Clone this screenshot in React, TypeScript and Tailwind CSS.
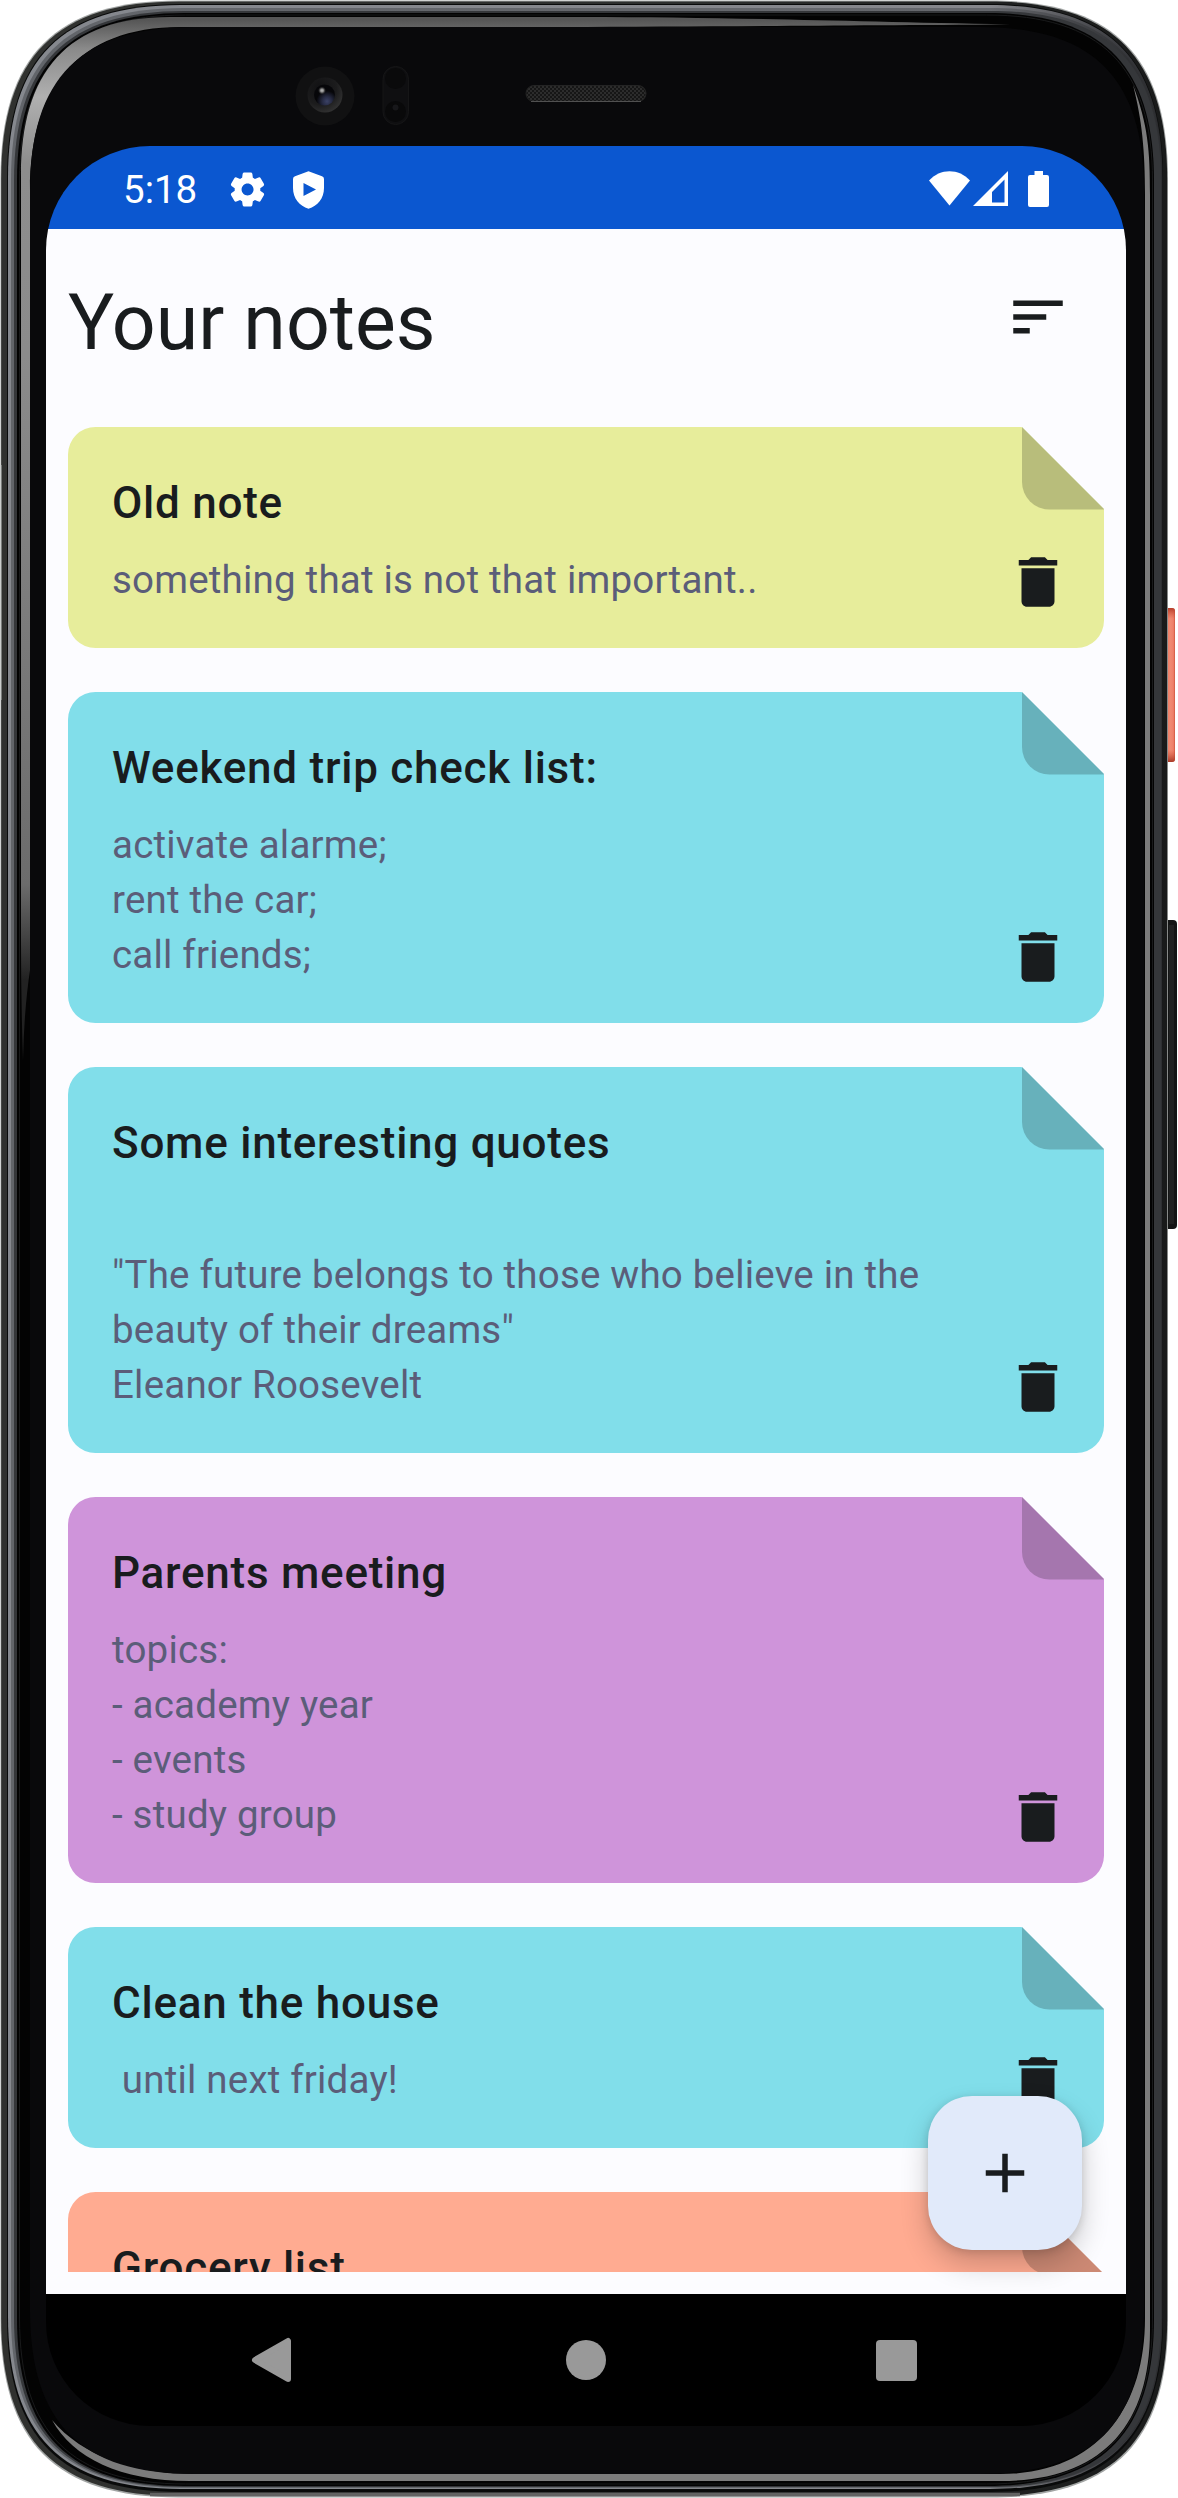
import { useId } from "react";

type Note = { title: string; content: string; color: string; fold: string };

const notes: Note[] = [
  { title: "Old note", content: "something that is not that important..", color: "bg-[#e7ed9b]", fold: "#b8bd7b" },
  {
    title: "Weekend trip check list:",
    content: "activate alarme;\nrent the car;\ncall friends;",
    color: "bg-[#81deea]",
    fold: "#67b1bb",
  },
  {
    title: "Some interesting quotes",
    content: "\n\"The future belongs to those who believe in the\nbeauty of their dreams\"\nEleanor Roosevelt",
    color: "bg-[#81deea]",
    fold: "#67b1bb",
  },
  {
    title: "Parents meeting",
    content: "topics:\n- academy year\n- events\n- study group",
    color: "bg-[#cf94da]",
    fold: "#a576ae",
  },
  { title: "Clean the house", content: " until next friday!", color: "bg-[#81deea]", fold: "#67b1bb" },
  { title: "Grocery list", content: "", color: "bg-[#ffab91]", fold: "#cc8974" },
];

/** Rounded outline whose corners are softer than circular arcs. */
function outline(l: number, t: number, r: number, b: number, c: number) {
  const h = c * 0.31;
  return [
    `M${l} ${t + c}C${l} ${t + h} ${l + h} ${t} ${l + c} ${t}`,
    `H${r - c}C${r - h} ${t} ${r} ${t + h} ${r} ${t + c}`,
    `V${b - c}C${r} ${b - h} ${r - h} ${b} ${r - c} ${b}`,
    `H${l + c}C${l + h} ${b} ${l} ${b - h} ${l} ${b - c}Z`,
  ].join("");
}

function DeviceFrame() {
  const id = useId();
  const ref = (name: string) => `url(#${id}${name})`;
  return (
    <svg className="absolute inset-0" width="1178" height="2498" viewBox="0 0 1178 2498" aria-hidden="true">
      <defs>
        <linearGradient id={`${id}edge`} x1="0" x2="1">
          <stop offset="0" stopColor="#30312f" />
          <stop offset="0.6" stopColor="#2d2f2e" />
          <stop offset="1" stopColor="#191a1a" />
        </linearGradient>
        <linearGradient id={`${id}light`} x1="0" x2="1">
          <stop offset="0" stopColor="#85888e" />
          <stop offset="0.85" stopColor="#85868b" />
          <stop offset="0.97" stopColor="#35363a" />
          <stop offset="1" stopColor="#28292b" />
        </linearGradient>
        <linearGradient id={`${id}mid`} x1="0" x2="1">
          <stop offset="0" stopColor="#62656a" />
          <stop offset="0.85" stopColor="#66686d" />
          <stop offset="0.97" stopColor="#303134" />
          <stop offset="1" stopColor="#2e2f32" />
        </linearGradient>
        <linearGradient id={`${id}ringL`} gradientUnits="userSpaceOnUse" x1="0" y1="980" x2="0" y2="20">
          <stop offset="0" stopColor="#222" />
          <stop offset="0.1" stopColor="#6c6c6c" />
          <stop offset="0.65" stopColor="#8b8b8b" />
          <stop offset="0.85" stopColor="#8d8d8d" />
          <stop offset="0.92" stopColor="#b0b0b0" />
          <stop offset="0.97" stopColor="#8a8a8a" />
          <stop offset="1" stopColor="#565656" />
        </linearGradient>
        <linearGradient id={`${id}power`} x1="0" x2="1">
          <stop offset="0" stopColor="#d85c42" />
          <stop offset="0.25" stopColor="#ed7c64" />
          <stop offset="0.6" stopColor="#f08a72" />
          <stop offset="0.85" stopColor="#ee8069" />
          <stop offset="1" stopColor="#cf573f" />
        </linearGradient>
        <linearGradient id={`${id}powerEnd`} x1="0" y1="0" x2="0" y2="1">
          <stop offset="0" stopColor="#b43e2a" />
          <stop offset="0.07" stopColor="#cf5138" stopOpacity="0" />
          <stop offset="0.92" stopColor="#cf5138" stopOpacity="0" />
          <stop offset="1" stopColor="#a63a28" />
        </linearGradient>
        <radialGradient id={`${id}lens`} cx="0.35" cy="0.3" r="0.8">
          <stop offset="0" stopColor="#111113" />
          <stop offset="0.6" stopColor="#1c1c1d" />
          <stop offset="1" stopColor="#363636" />
        </radialGradient>
        <radialGradient id={`${id}pupil`} cx="0.62" cy="0.8" r="0.5">
          <stop offset="0" stopColor="#3b4266" />
          <stop offset="0.45" stopColor="#262a42" />
          <stop offset="1" stopColor="#060609" />
        </radialGradient>
        <radialGradient id={`${id}glint`}>
          <stop offset="0" stopColor="#b9b9b9" />
          <stop offset="0.4" stopColor="#8b8b8b" />
          <stop offset="1" stopColor="#333" stopOpacity="0" />
        </radialGradient>
        <pattern id={`${id}mesh`} width="4" height="4" patternUnits="userSpaceOnUse">
          <rect width="4" height="4" fill="#161616" />
          <circle cx="1" cy="1" r="0.8" fill="#484848" />
          <circle cx="3" cy="3" r="0.8" fill="#484848" />
        </pattern>
      </defs>

      <rect x="1164" y="920" width="13" height="309" rx="4" fill="#141515" />
      <rect x="1169" y="925" width="5" height="299" fill="#202121" />
      <rect x="1164" y="608" width="11" height="154" rx="3" fill={ref("power")} />
      <rect x="1164" y="608" width="11" height="154" rx="3" fill={ref("powerEnd")} />

      <path d={outline(0.5, 0.5, 1168, 2497.5, 178)} fill="#a2a5a4" />
      <path d={outline(1.2, 1.5, 1167.2, 2496, 178)} fill={ref("edge")} />
      <path d="M150 2494.5H1020" stroke="#626262" strokeWidth="3.5" fill="none" />
      <path d={outline(7, 4, 1163, 2492, 174)} fill="#090a0a" />
      <path d={outline(8, 5, 1162.5, 2489, 173)} fill={ref("light")} />
      <path d={outline(11, 8, 1162, 2488, 172)} fill={ref("mid")} />
      <path d={outline(14, 11, 1161, 2487, 170)} fill="#35373a" />
      <path d={outline(17, 13, 1154, 2486, 168)} fill="#030303" />
      <path d={outline(19.5, 15, 1152.5, 2484, 166)} fill="none" stroke="#191a1b" />

      {/* glass edge reflections */}
      <path
        d="M21 940V176C21 72 67 17 170 17H580C720 17 830 21 1010 24.5C830 25.5 700 26.5 560 27H180C78 27 30 88 30 190V970Q24 1010 23 1060Q21 1000 21 940Z"
        fill={ref("ringL")}
      />
      <path
        d="M1133 85C1148 125 1150 150 1150 195V2330C1150 2430 1098 2481 1000 2481H190C120 2481 73 2458 52 2420C82 2456 135 2474 195 2474H1000C1096 2474 1145 2410 1145 2318V195C1145 150 1142 120 1133 85Z"
        fill="#7b7b7b"
      />
      <path d={outline(30, 27, 1144, 2474, 164)} fill="#09090b" />
      <path d="M0.7 465V700" stroke="#c9cccb" strokeWidth="1.4" />

      {/* front camera and sensors */}
      <circle cx="325" cy="96" r="29.5" fill="#111112" />
      <circle cx="325" cy="95" r="17.5" fill={ref("lens")} />
      <circle cx="324.5" cy="95" r="10.5" fill={ref("pupil")} />
      <circle cx="322" cy="90.5" r="4" fill={ref("glint")} />
      <rect x="383" y="66.5" width="25.5" height="58" rx="12.7" fill="#0f0f11" stroke="#161617" />
      <circle cx="395.5" cy="78.5" r="10.5" fill="#0a0a0b" />
      <circle cx="395.5" cy="111.5" r="10.5" fill="#09090a" />
      <circle cx="395.5" cy="107.5" r="3" fill="#17171a" />
      <rect x="526" y="85.5" width="120" height="16" rx="8" fill={ref("mesh")} stroke="#242424" />
      <path d="M531 101.5H641" stroke="#505050" />
    </svg>
  );
}

function StatusBar() {
  return (
    <div className="flex h-[83px] shrink-0 items-center bg-[#0b57d0] pl-[77px] pr-[77px] text-white">
      <span className="w-[104px] pt-[4px] text-[38.5px] leading-[44px]">5:18</span>
      <svg className="mt-[4px] h-[41px] w-[41px]" viewBox="0 0 24 24" fill="currentColor">
        <path d="M19.5 12c0-.23-.01-.45-.03-.68l1.86-1.41c.4-.3.51-.86.26-1.3l-1.87-3.23a.987.987 0 0 0-1.25-.42l-2.15.91c-.37-.26-.76-.49-1.17-.68l-.29-2.31c-.06-.5-.49-.88-.99-.88h-3.73c-.51 0-.94.38-1 .88l-.29 2.31c-.41.19-.8.42-1.17.68l-2.15-.91c-.46-.2-1-.02-1.25.42L2.41 8.62c-.25.44-.14.99.26 1.3l1.86 1.41a7.343 7.343 0 0 0 0 1.35l-1.86 1.41c-.4.3-.51.86-.26 1.3l1.87 3.23c.25.44.79.62 1.25.42l2.15-.91c.37.26.76.49 1.17.68l.29 2.31c.06.5.49.88.99.88h3.73c.5 0 .93-.38.99-.88l.29-2.31c.41-.19.8-.42 1.17-.68l2.15.91c.46.2 1 .02 1.25-.42l1.87-3.23c.25-.44.14-.99-.26-1.3l-1.86-1.41c.03-.23.04-.45.04-.68zm-7.46 3.5c-1.93 0-3.5-1.57-3.5-3.5s1.57-3.5 3.5-3.5 3.5 1.57 3.5 3.5-1.57 3.5-3.5 3.5z" />
      </svg>
      <svg className="ml-[25px] mt-[4px] h-[38px] w-[31px]" viewBox="0 0 31 38" fill="currentColor">
        <path
          fillRule="evenodd"
          d="M15.5 0.3 29 5.2Q31 6 31 8V17C31 27.5 24.5 35 15.5 37.8C6.5 35 0 27.5 0 17V8Q0 6 2 5.2ZM10.5 12V25L23 18.5Z"
        />
      </svg>
      <div className="flex-1" />
      <svg className="mt-px h-[35px] w-[41px]" viewBox="0 0 41 35" fill="currentColor">
        <path d="M20.5 34.5 0 9.5C11-3 30-3 41 9.5Z" />
      </svg>
      <svg className="ml-[3px] mt-[2px] h-[35px] w-[35px]" viewBox="0 0 35 35" fill="currentColor">
        <path fillRule="evenodd" d="M35 0V35H0ZM31.5 8.5 19 21V31.5H31.5Z" />
      </svg>
      <svg className="ml-5 mt-[3px] h-[36px] w-[21px]" viewBox="0 0 21 36" fill="currentColor">
        <path d="M6.5 0H15V4H19Q21 4 21 6V34Q21 36 19 36H2Q0 36 0 34V6Q0 4 2 4H6.5Z" />
      </svg>
    </div>
  );
}

function NoteCard({ note }: { note: Note }) {
  return (
    <article className="relative shrink-0">
      <div
        className={`${note.color} rounded-[27.5px] px-[44px] pb-[41px] pt-[43px] [clip-path:polygon(0_0,calc(100%-82.5px)_0,100%_82.5px,100%_100%,0_100%)]`}
      >
        <h2 className="text-[44px] font-medium leading-[66px] tracking-[0.75px] text-[#191c1e]">{note.title}</h2>
        <p className="mt-[16px] min-h-[55px] whitespace-pre-wrap text-[38.5px] leading-[55px] tracking-[0.2px] text-[#5b5d79]">
          {note.content}
        </p>
      </div>
      <svg className="absolute right-0 top-0 size-[82.5px]" viewBox="0 0 82.5 82.5">
        <path d="M0 0 82.5 82.5H27.5A27.5 27.5 0 0 1 0 55Z" fill={note.fold} />
      </svg>
      <button aria-label="Delete note" className="absolute bottom-0 right-0 flex size-[132px] items-center justify-center">
        <svg className="size-[66px]" viewBox="0 0 24 24" fill="#191c1e">
          <path d="M6 19c0 1.1.9 2 2 2h8c1.1 0 2-.9 2-2V7H6v12zM19 4h-3.5l-1-1h-5l-1 1H5v2h14V4z" />
        </svg>
      </button>
    </article>
  );
}

export default function App() {
  return (
    <div className="relative h-[2498px] w-[1178px] overflow-hidden bg-white pl-[46px] pr-[52px] pt-[146px] font-['Roboto',sans-serif]">
      <DeviceFrame />
      <main className="relative flex h-[2280px] flex-col overflow-hidden rounded-[104px]">
        <StatusBar />
        <section className="relative flex min-h-0 flex-1 flex-col bg-[#fcfcff] p-[22px]">
          <header className="flex h-[132px] shrink-0 items-center justify-between">
            <h1 className="pt-[12px] text-[77px] leading-[99px] text-[#191c1e]">Your notes</h1>
            <button aria-label="Sort notes" className="flex size-[132px] items-center justify-center">
              <svg className="size-[66px]" viewBox="0 0 24 24" fill="#191c1e">
                <path d="M3 18h6v-2H3v2zM3 6v2h18V6H3zm0 7h12v-2H3v2z" />
              </svg>
            </button>
          </header>
          <div className="mt-[44px] flex min-h-0 flex-1 flex-col gap-[44px] overflow-hidden">
            {notes.map((note) => (
              <NoteCard key={note.title} note={note} />
            ))}
          </div>
          <button
            aria-label="Add note"
            className="absolute bottom-[44px] right-[44px] flex size-[154px] items-center justify-center rounded-[44px] bg-[#e1eafa] shadow-[0_14px_28px_rgba(0,0,0,0.2),0_2px_8px_rgba(0,0,0,0.14)]"
          >
            <svg className="size-[66px]" viewBox="0 0 24 24" fill="#191c1e">
              <path d="M19 13h-6v6h-2v-6H5v-2h6V5h2v6h6v2z" />
            </svg>
          </button>
        </section>
        <nav className="flex h-[132px] shrink-0 items-center bg-black pl-[205px] text-[#999999]">
          <svg className="h-[46px] w-[40px]" viewBox="0 0 40 46" fill="currentColor" stroke="currentColor" strokeWidth="6" strokeLinejoin="round">
            <path d="M4 23 37 4V42Z" />
          </svg>
          <div className="ml-[275px] size-[40px] rounded-full bg-[#999999]" />
          <div className="ml-[270px] size-[41px] rounded-[4px] bg-[#999999]" />
        </nav>
      </main>
    </div>
  );
}
